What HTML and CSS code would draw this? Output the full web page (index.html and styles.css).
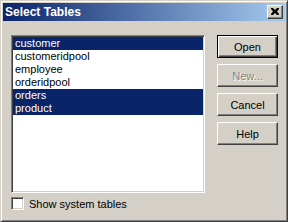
FILE: index.html
```html
<!DOCTYPE html>
<html>
<head>
<meta charset="utf-8">
<link rel="stylesheet" href="styles.css">
</head>
<body>
<div class="window">
  <div class="titlebar">
    <span class="title">Select Tables</span>
    <div class="close">
      <svg width="8" height="7" viewBox="0 0 8 7"><path d="M0 0h2l2 2 2-2h2v1l-2 2.5 2 2.5v1h-2l-2-2-2 2h-2v-1l2-2.5-2-2.5z" fill="#000"/></svg>
    </div>
  </div>
  <div class="body">
    <div class="top">
      <div class="listbox">
        <div class="item sel">customer</div>
        <div class="item">customeridpool</div>
        <div class="item">employee</div>
        <div class="item">orderidpool</div>
        <div class="item sel">orders</div>
        <div class="item sel">product</div>
      </div>
      <div class="buttons">
        <div class="btn default"><span>Open</span></div>
        <div class="btn disabled"><span>New...</span></div>
        <div class="btn"><span>Cancel</span></div>
        <div class="btn"><span>Help</span></div>
      </div>
    </div>
    <div class="check-row">
      <div class="checkbox"></div>
      <span class="label">Show system tables</span>
    </div>
  </div>
</div>
</body>
</html>
```
FILE: styles.css
```css
html, body {
  margin: 0;
  padding: 0;
  background: #d4d0c8;
}
.window {
  box-sizing: border-box;
  width: 288px;
  height: 222px;
  background: #d4d0c8;
  border: 1px solid;
  border-color: #d4d0c8 #404040 #404040 #d4d0c8;
  box-shadow: inset 1px 1px #ffffff, inset -1px -1px #808080;
  padding: 2px;
  font-family: "Liberation Sans", Arial, sans-serif;
  font-size: 11px;
  color: #000;
}
.titlebar {
  height: 18px;
  background: linear-gradient(to right, #0a246a, #a6caf0);
  display: flex;
  align-items: center;
  justify-content: space-between;
}
.title {
  color: #fff;
  font-weight: bold;
  font-size: 12px;
  padding-left: 2px;
}
.close {
  box-sizing: border-box;
  width: 16px;
  height: 14px;
  margin-right: 2px;
  background: #d4d0c8;
  border: 1px solid;
  border-color: #fff #404040 #404040 #fff;
  box-shadow: inset -1px -1px #808080;
  display: flex;
  align-items: center;
  justify-content: center;
  padding: 0 1px 1px 0;
}
.close svg { display: block; }
.body {
  padding: 14px 7px 0 8px;
}
.top {
  display: flex;
  gap: 12px;
}
.listbox {
  box-sizing: border-box;
  width: 195px;
  height: 158px;
  background: #fff;
  border: 1px solid;
  border-color: #808080 #fff #fff #808080;
  box-shadow: inset 1px 1px #404040, inset -1px -1px #d4d0c8;
  padding: 1px;
}
.item {
  height: 13px;
  line-height: 13px;
  padding-left: 2px;
  white-space: nowrap;
}
.item.sel {
  background: #0a246a;
  color: #fff;
}
.buttons {
  display: flex;
  flex-direction: column;
  gap: 6px;
}
.btn {
  box-sizing: border-box;
  width: 61px;
  height: 23px;
  background: #d4d0c8;
  border: 1px solid;
  border-color: #fff #404040 #404040 #fff;
  box-shadow: inset -1px -1px #808080;
  display: flex;
  align-items: center;
  justify-content: center;
}
.btn.default {
  border: 1px solid #000;
  box-shadow: inset 1px 1px #fff, inset -1px -1px #404040, inset -2px -2px #808080;
}
.btn.disabled span {
  color: #808080;
  text-shadow: 1px 1px #fff;
}
.check-row {
  display: flex;
  align-items: center;
  gap: 5px;
  margin-top: 4px;
}
.checkbox {
  box-sizing: border-box;
  width: 13px;
  height: 13px;
  background: #fff;
  border: 1px solid;
  border-color: #808080 #fff #fff #808080;
  box-shadow: inset 1px 1px #404040, inset -1px -1px #d4d0c8;
}
```
